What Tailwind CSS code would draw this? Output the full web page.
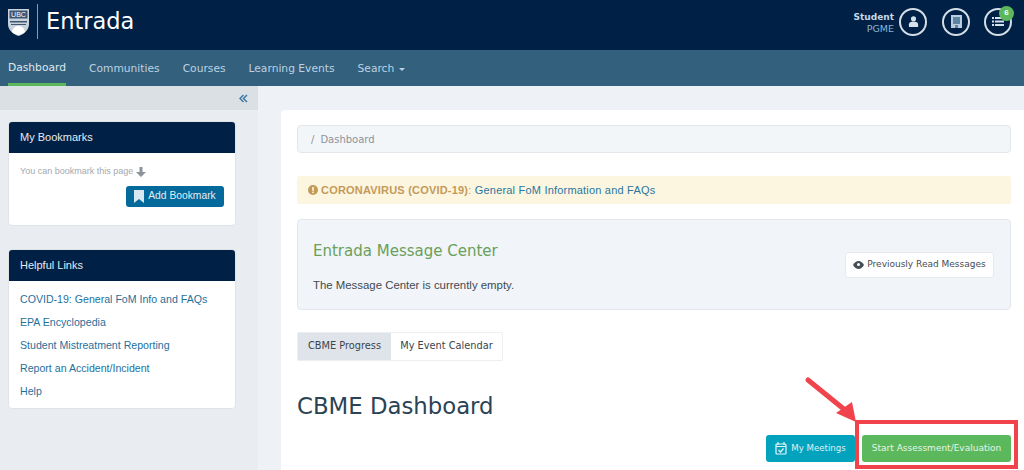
<!DOCTYPE html>
<html lang="en">
  <head>
    <meta charset="UTF-8" />
    <title>Entrada</title>
    <script src="https://cdn.jsdelivr.net/npm/@tailwindcss/browser@4"></script>
  </head>
  <body class="relative h-[470px] w-[1024px] overflow-hidden bg-[#eef1f5] font-['Liberation_Sans',sans-serif]">
    <!-- top header -->
    <header class="flex h-[50px] items-center justify-between bg-[#002145] pb-[7px] pl-2 pr-[12px]">
      <div class="flex items-center">
        <svg class="h-[28px] w-[21px]" viewBox="0 0 21 28">
          <path d="M0 1h21v15c0 6-5 10-10.500 12C5 26 0 22 0 16z" fill="#c9d2dc" />
          <rect x="1.500" y="2.500" width="18" height="8" fill="#3d5672" />
          <text x="10.500" y="9.300" text-anchor="middle" font-size="7" fill="#fff" font-family="Liberation Sans">UBC</text>
          <path d="M2 13h17v1.500H2zM3 16h15v1H3z" fill="#3d5672" />
          <path d="M4 24c1-5 4-6 6.500-6s5.500 1 6.500 6c-2 2-4 2.500-6.500 3-2.500-.5-4.500-1-6.500-3z" fill="#fff" />
        </svg>
        <div class="ml-[8px] h-[35px] w-px bg-[#8b9bad]"></div>
        <span class="ml-[8px] font-['DejaVu_Sans',sans-serif] text-[22.500px] leading-none text-white">Entrada</span>
      </div>
      <div class="flex items-center">
        <div class="mr-[5px] pt-[2px] text-right font-['DejaVu_Sans',sans-serif] leading-[12px]">
          <div class="text-[9px] font-bold text-[#c5d8e8]">Student</div>
          <div class="text-[9.500px] text-[#8fb4d0]">PGME</div>
        </div>
        <div class="flex h-[28px] w-[28px] items-center justify-center rounded-full border-2 border-[#d5dee6]">
          <svg class="h-[11px] w-[11px]" viewBox="0 0 12 12" fill="#d5e2ec"><circle cx="6" cy="3" r="2.800" /><path d="M1 12V9c0-2 2-3 5-3s5 1 5 3v3z" /></svg>
        </div>
        <div class="ml-[15px] flex h-[28px] w-[28px] items-center justify-center rounded-full border-2 border-[#d5dee6]">
          <svg class="h-[13px] w-[11px]" viewBox="0 0 11 13"><rect width="11" height="13" fill="#b9cfe0" /><rect x="2" y="2" width="7" height="7" fill="#5d84a3" /><rect x="4" y="10" width="3" height="3" fill="#5d84a3" /></svg>
        </div>
        <div class="relative ml-[14px] flex h-[28px] w-[28px] items-center justify-center rounded-full border-2 border-[#d5dee6]">
          <svg class="h-[9px] w-[12px]" viewBox="0 0 12 9" fill="#d5e2ec"><path d="M0 0h2v2H0zM3 0h9v2H3zM0 3.500h2v2H0zM3 3.500h9v2H3zM0 7h2v2H0zM3 7h9v2H3z" /></svg>
          <span class="absolute right-[-4px] top-[-4px] flex h-[15px] w-[15px] items-center justify-center rounded-full bg-[#5cb85c] text-[8px] font-bold text-white">6</span>
        </div>
      </div>
    </header>

    <!-- main nav -->
    <nav class="flex h-[36px] bg-[#33607d] pl-2 font-['DejaVu_Sans',sans-serif] text-[10.700px] text-[#bcd2e2]">
      <a class="flex h-full items-center border-b-[3px] border-[#5cb85c] pt-[4px] font-medium text-[#dfe8ef]">Dashboard</a>
      <a class="ml-[23px] flex items-center pt-[2px]">Communities</a>
      <a class="ml-[23px] flex items-center pt-[2px]">Courses</a>
      <a class="ml-[23px] flex items-center pt-[2px]">Learning Events</a>
      <a class="ml-[23px] flex items-center pt-[2px]">Search
        <svg class="ml-[5px] h-[3px] w-[6px]" viewBox="0 0 6 3" fill="#bcd2e2"><path d="M0 0h6L3 3z" /></svg>
      </a>
    </nav>

    <div class="flex">
      <!-- sidebar -->
      <aside class="h-[384px] w-[258px] shrink-0 bg-[#e9edf1]">
        <div class="flex h-[24px] items-center justify-end bg-[#dbe0e4] pr-[10px]">
          <svg class="h-[9px] w-[9px]" viewBox="0 0 9 9" fill="none" stroke="#3f7ba6" stroke-width="1.500"><path d="M4.500 1 1 4.500 4.500 8M8 1 4.500 4.500 8 8" /></svg>
        </div>
        <div class="ml-[8px] mt-[11px] w-[228px] overflow-hidden rounded-[4px] border border-[#e0e4e8] bg-white">
          <div class="flex h-[31px] items-center bg-[#002145] pl-[11px] text-[11px] text-[#e4ebf1]">My Bookmarks</div>
          <div class="h-[72px] px-[11px] pt-[12px]">
            <div class="flex items-center text-[9px] text-[#a3a9b0]">
              You can bookmark this page
              <svg class="ml-[3px] h-[10px] w-[10px]" viewBox="0 0 10 10" fill="#8b949c"><path d="M3.500 0h3v5H10L5 10 0 5h3.500z" /></svg>
            </div>
            <div class="mt-[7px] flex justify-end">
              <button class="flex h-[21px] w-[98px] items-center justify-center rounded-[3px] bg-[#04699b] text-[10.300px] text-[#e2edf4]">
                <svg class="mr-[4px] h-[13px] w-[10px]" viewBox="0 0 10 13" fill="#d9e7f0"><path d="M0 0h10v13L5 9l-5 4z" /></svg>
                Add Bookmark
              </button>
            </div>
          </div>
        </div>
        <div class="ml-[8px] mt-[23px] w-[228px] overflow-hidden rounded-[4px] border border-[#e0e4e8] bg-white">
          <div class="flex h-[31px] items-center bg-[#002145] pl-[11px] text-[11px] text-[#e4ebf1]">Helpful Links</div>
          <ul class="flex h-[127px] flex-col gap-[5px] pl-[11px] pt-[9px] text-[10.600px] leading-[18px] text-[#1f6f9c]">
            <li>COVID-19: General FoM Info and FAQs</li>
            <li>EPA Encyclopedia</li>
            <li>Student Mistreatment Reporting</li>
            <li>Report an Accident/Incident</li>
            <li>Help</li>
          </ul>
        </div>
      </aside>

      <!-- content -->
      <main class="flex-1 pl-[23px] pt-[24px]">
        <div class="h-[360px] rounded-tl-[4px] bg-white pl-[16px] pr-[13px] pt-[15px]">
          <div class="flex h-[28px] items-center rounded-[4px] border border-[#e3e7eb] bg-[#f3f6f9] pl-[13px] font-['DejaVu_Sans',sans-serif] text-[10px] text-[#8c939a]">
            <span class="mr-[6px]">/</span>Dashboard
          </div>
          <div class="mt-[23px] flex h-[28px] items-center rounded-[3px] bg-[#fcf5e0] pl-[11px] text-[11px] tracking-[0.2px]">
            <svg class="mr-[3px] h-[10px] w-[10px]" viewBox="0 0 10 10"><circle cx="5" cy="5" r="5" fill="#c49a58" /><rect x="4.200" y="2" width="1.600" height="3.800" fill="#fcf5e0" /><rect x="4.200" y="6.600" width="1.600" height="1.500" fill="#fcf5e0" /></svg>
            <span class="font-bold text-[#c49a58]">CORONAVIRUS (COVID-19)</span><span class="text-[#c49a58]">:&nbsp;</span>
            <span class="text-[#2a779f]">General FoM Information and FAQs</span>
          </div>
          <div class="mt-[15px] flex h-[91px] items-center justify-between rounded-[4px] border border-[#e3e7eb] bg-[#f1f4f8] pl-[15px] pr-[16px]">
            <div class="pt-[5px]">
              <div class="font-['DejaVu_Sans',sans-serif] text-[15px] leading-[18px] text-[#6aa05a]">Entrada Message Center</div>
              <div class="mt-[18px] text-[11.400px] leading-[14px] text-[#3f4a52]">The Message Center is currently empty.</div>
            </div>
            <button class="flex h-[26px] w-[149px] items-center justify-center whitespace-nowrap rounded-[3px] border border-[#e6e9ed] bg-white font-['DejaVu_Sans',sans-serif] text-[9px] text-[#454d55]">
              <svg class="mr-[3px] h-[8px] w-[11px]" viewBox="0 0 11 8" fill="#454d55"><path d="M0 4c1.500-2.600 3.500-4 5.500-4S9.500 1.400 11 4C9.500 6.600 7.500 8 5.500 8S1.500 6.600 0 4z" /><circle cx="5.500" cy="3.500" r="1.500" fill="#fff" /></svg>
              Previously Read Messages
            </button>
          </div>
          <div class="mt-[22px] flex h-[29px] w-[206px] rounded-[2px] border border-[#eceef1] font-['DejaVu_Sans',sans-serif] text-[9.800px] text-[#3b444c]">
            <span class="flex w-[93px] items-center justify-center bg-[#dfe4ea]">CBME Progress</span>
            <span class="flex flex-1 items-center justify-center">My Event Calendar</span>
          </div>
          <h1 class="mt-[31px] font-['DejaVu_Sans',sans-serif] text-[22.800px] leading-[28px] text-[#2a4355]">CBME Dashboard</h1>
          <div class="mt-[15px] flex justify-end gap-[7px]">
            <button class="flex h-[27px] w-[89px] items-center justify-center whitespace-nowrap rounded-[3px] bg-[#04a3bd] font-['DejaVu_Sans',sans-serif] text-[8.600px] text-[#dff2f6]">
              <svg class="mr-[4px] h-[13px] w-[12px]" viewBox="0 0 12 13" fill="none" stroke="#e6f5f8" stroke-width="1.200"><rect x="1" y="2" width="10" height="10" rx="1" /><path d="M3 0v3M9 0v3M1 4.500h10M3.500 8l2 2 3-3.500" /></svg>
              My Meetings
            </button>
            <button class="h-[27px] w-[149px] rounded-[3px] bg-[#5cb85c] font-['DejaVu_Sans',sans-serif] text-[9px] text-[#e6f4e6]">Start Assessment/Evaluation</button>
          </div>
        </div>
      </main>
    </div>

    <!-- red annotation drawn on the screenshot -->
    <div class="absolute left-[855px] top-[420px] h-[49px] w-[163px] border-4 border-[#f0434c]"></div>
    <svg class="absolute left-[800px] top-[372px] h-[52px] w-[62px]" viewBox="0 0 62 52">
      <path d="M8 8 45 38" stroke="#f0434c" stroke-width="5" stroke-linecap="round" />
      <path d="M56 50 36 41 52 30z" fill="#f0434c" />
    </svg>
  </body>
</html>
